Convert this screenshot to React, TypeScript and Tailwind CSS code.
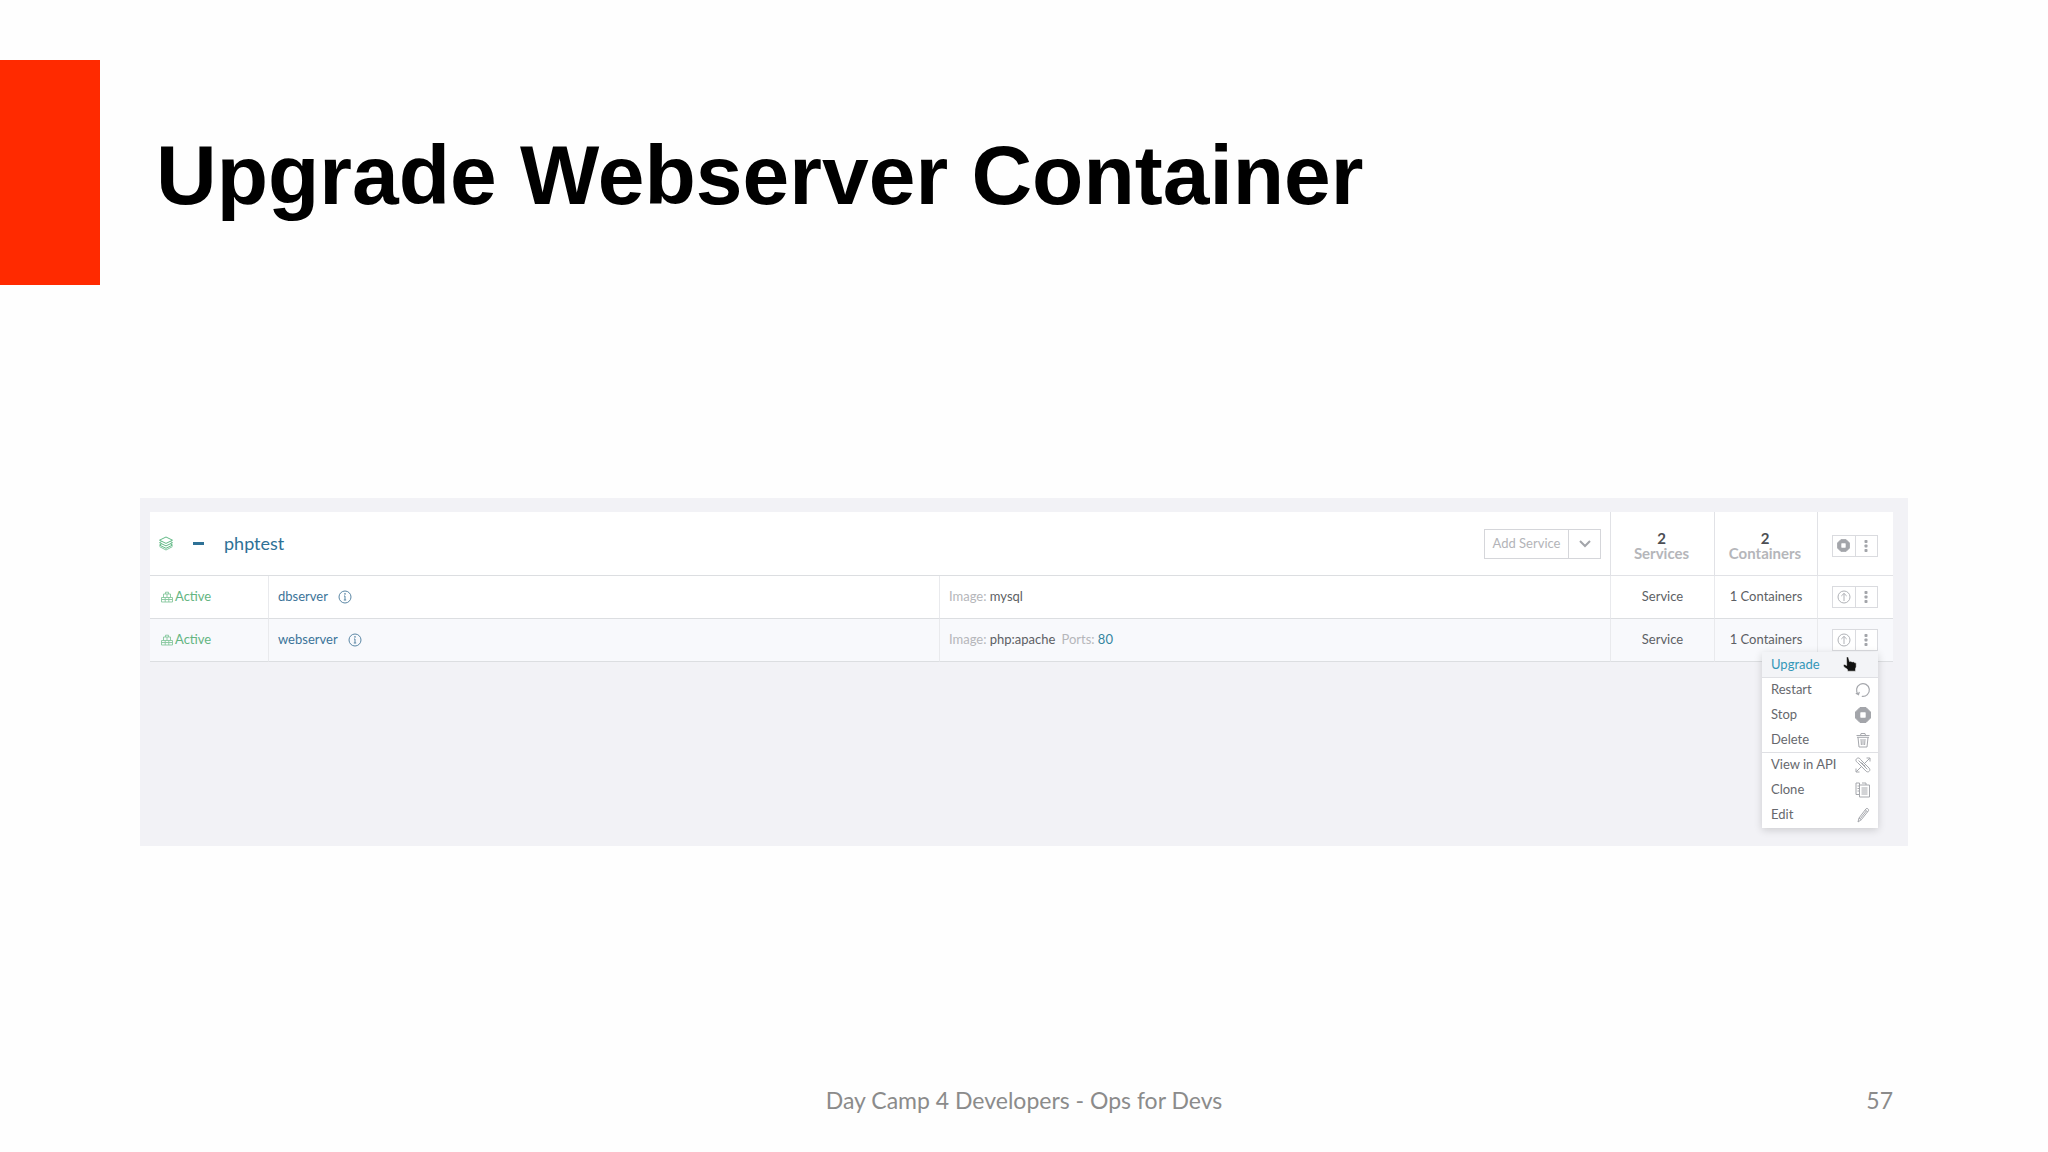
import type { ReactNode } from 'react';
import clsx from 'clsx';

const services = [
  { name: 'dbserver', image: 'mysql', ports: '', open: false },
  { name: 'webserver', image: 'php:apache', ports: '80', open: true },
];

function StackIcon() {
  return (
    <svg width="16" height="16" viewBox="0 0 16 16" fill="none" stroke="#62ba86" strokeWidth="1" strokeLinejoin="round">
      <path d="M8 1 14.500 4.200 8 7.400 1.500 4.200Z" />
      <path d="M3.500 5.600 1.500 6.700 8 9.900l6.500-3.200-2-1.100" />
      <path d="M3.500 8 1.500 9.100 8 12.300l6.500-3.200-2-1.100" />
      <path d="M1.500 10.600 8 14l6.500-3.400" strokeWidth=".8" />
    </svg>
  );
}

function ServiceIcon() {
  return (
    <svg width="12" height="12" viewBox="0 0 12 12" fill="none" stroke="#86c79d" strokeWidth="0.9">
      <path d="M.5 6.500h11v4.500H.5zM4.200 6.500V11M7.800 6.500V11M2.500 6.500V3h7v3.500M6 3v3.500M4.500 3V1.200h3V3M.5 8.500h11" />
    </svg>
  );
}

function InfoIcon() {
  return (
    <svg width="14" height="14" viewBox="0 0 14 14" fill="none" stroke="#5b87a5" strokeWidth="1">
      <circle cx="7" cy="7" r="6" />
      <path d="M6 6h1v4M5.800 10h2.400" />
      <circle cx="7" cy="3.900" r=".4" fill="#5b87a5" />
    </svg>
  );
}

function UpIcon() {
  return (
    <svg width="14" height="14" viewBox="0 0 14 14" fill="none" stroke="#b0b2b7" strokeWidth="1">
      <circle cx="7" cy="7" r="6" />
      <path d="M7 11V3.500M4.300 6 7 3.400 9.700 6" />
    </svg>
  );
}

function StopIcon({ size }: { size: number }) {
  return (
    <svg width={size} height={size} viewBox="0 0 16 16">
      <path d="M5 .5h6L15.500 5v6L11 15.500H5L.5 11V5Z" fill="#a3a5aa" stroke="#a3a5aa" strokeLinejoin="round" />
      <rect x="5.300" y="5.300" width="5.400" height="5.400" rx=".6" fill="#fff" />
    </svg>
  );
}

function DotsIcon() {
  return (
    <svg width="4" height="14" viewBox="0 0 4 14" fill="#a3a5aa">
      <rect x=".5" y="1" width="3" height="3" rx=".8" />
      <rect x=".5" y="5.500" width="3" height="3" rx=".8" />
      <rect x=".5" y="10" width="3" height="3" rx=".8" />
    </svg>
  );
}

function MenuSvg({ children }: { children: ReactNode }) {
  return (
    <svg width="16" height="16" viewBox="0 0 16 16" fill="none" stroke="#a6a8ad" strokeWidth="1">
      {children}
    </svg>
  );
}

const menuGroups: { label: string; icon?: ReactNode }[][] = [
  [{ label: 'Upgrade' }],
  [
    {
      label: 'Restart',
      icon: (
        <MenuSvg>
          <path d="M3.300 12.400A6.400 6.400 0 1 1 6.800 14.300M.8 11.300l2.700 1.300.8-2.800" strokeWidth="1.200" />
        </MenuSvg>
      ),
    },
    { label: 'Stop', icon: <StopIcon size={16} /> },
    {
      label: 'Delete',
      icon: (
        <MenuSvg>
          <path d="M1.500 3.500h13M2 5.300h12M5.500 3.500l.5-2h4l.5 2M3 5.500 4 15h8l1-9.500M6 7l.4 6M8 7v6M10 7l-.4 6" />
        </MenuSvg>
      ),
    },
  ],
  [
    {
      label: 'View in API',
      icon: (
        <MenuSvg>
          <path d="M1.500 1.800C3 .3 4.800 1 5.500 2.500L14 11c1.200 1.200 1 2.500.2 3.300s-2.200.8-3.200-.2L2.500 5.500C1 4.800.3 3 1.500 1.800ZM3.500 3.500l8.800 8.800M6.500 5.500l1.800 1.800M8.500 7.500l1.800 1.800" />
          <path d="M1.200 14.800 6 10M10 6l4.800-4.800M11.500 1H15v3.500M1 11.500V15h3.500" />
        </MenuSvg>
      ),
    },
    {
      label: 'Clone',
      icon: (
        <MenuSvg>
          <path d="M4.500 3V1H1v11.500h3.500M2.500 4h1.500M2.500 6.500h1.500M2.500 9h1.500M4.500 3h10v12h-10zM7 1h4v2M6.500 6h6M6.500 8h6M6.500 10h6M6.500 12h6" />
        </MenuSvg>
      ),
    },
    {
      label: 'Edit',
      icon: (
        <MenuSvg>
          <path d="M3 15 4 11 11 1.800c1-1 3.200.3 2.500 1.900L6.300 12.700ZM4 11l2.300 1.700M10.300 3l2.300 1.700M5.500 11.500 11.300 4" />
        </MenuSvg>
      ),
    },
  ],
];

function HandCursor() {
  return (
    <svg width="16" height="16" viewBox="0 0 16 16" className="absolute top-1 right-5">
      <path
        d="M4.500 1.200c1-.6 1.900 0 2.100 1L7.500 5.500l1.300-.2 1.300.6 1.400-.1 1 .8 1.700.4v4L13.500 12.500v2.700H5.700l-.4-2L2 11 1.200 9l1.500-.5 2 1Z"
        fill="#111"
        stroke="#fff"
        strokeWidth=".5"
      />
    </svg>
  );
}

function ActionMenu() {
  return (
    <div className="absolute top-[33px] right-[15px] z-10 w-[116px] bg-white pb-px text-left shadow-[0_2px_8px_rgba(0,0,0,0.16)]">
      {menuGroups.map((group, i) => (
        <div key={i}>
          {group.map(({ label, icon }) => (
            <button
              key={label}
              className={clsx(
                'relative flex h-[25px] w-full items-center justify-between pr-[7px] pl-[9px]',
                icon ? 'border-[#dfe0e4] text-[#66686d] first:border-t' : 'bg-[#f3f4f7] text-[#3397b8]',
              )}
            >
              {label}
              {icon ?? <HandCursor />}
            </button>
          ))}
        </div>
      ))}
    </div>
  );
}

function ButtonPair({ icon, label }: { icon: ReactNode; label: string }) {
  return (
    <div className="ml-[14px] flex h-[22px] w-[46px] border border-[#dadbdf] bg-white">
      <button aria-label={label} className="flex flex-1 items-center justify-center border-r border-[#dadbdf]">
        {icon}
      </button>
      <button aria-label="More actions" className="flex flex-1 items-center justify-center">
        <DotsIcon />
      </button>
    </div>
  );
}

function Count({ value, label }: { value: number; label: string }) {
  return (
    <td className="border-b border-l border-[#e1e2e6] pt-1 pr-[2px] text-center text-[15px] leading-[15px] font-bold text-[#b5b6ba]">
      <div className="text-[#4d4f54]">{value}</div>
      <div>{label}</div>
    </td>
  );
}

export default function App() {
  return (
    <div className="flex min-h-screen flex-col bg-[#fefefe] pt-[60px] font-['Lato',sans-serif]">
      <header className="flex h-[225px] items-center">
        <div className="h-full w-[100px] bg-[#ff2a00]" />
        <h1 className="mt-1 ml-14 font-['Liberation_Sans',sans-serif] text-[84px] leading-[96px] font-bold text-black">
          Upgrade Webserver Container
        </h1>
      </header>

      <main className="mx-[140px] mt-[213px] min-h-[348px] bg-[#f2f2f6] pt-[14px] pr-[15px] pl-[10px]">
        <table className="w-full table-fixed border-separate border-spacing-0 text-[13px] text-[#5d5f64]">
          <colgroup>
            <col className="w-[118px]" />
            <col />
            <col />
            <col className="w-[104px]" />
            <col className="w-[103px]" />
            <col className="w-[76px]" />
          </colgroup>
          <tbody>
            <tr className="h-16 bg-white">
              <td colSpan={3} className="border-b border-[#dcdee1]">
                <div className="flex items-center pr-[9px] pl-2">
                  <StackIcon />
                  <button aria-label="Collapse" className="ml-[19px] h-[3px] w-[11px] bg-[#2e7196]" />
                  <a href="#phptest" className="ml-5 text-[18px] text-[#2e7196]">
                    phptest
                  </a>
                  <div className="ml-auto flex h-[30px] border border-[#d5d6da] text-[13px] text-[#b3b4b8]">
                    <button className="w-[83px]">Add Service</button>
                    <button aria-label="More service types" className="flex w-8 items-center justify-center border-l border-[#d5d6da]">
                      <svg width="12" height="8" viewBox="0 0 12 8" fill="none" stroke="#a3a5aa" strokeWidth="2">
                        <path d="m1 1 5 5 5-5" />
                      </svg>
                    </button>
                  </div>
                </div>
              </td>
              <Count value={2} label="Services" />
              <Count value={2} label="Containers" />
              <td className="border-b border-l border-[#e1e2e6] pt-1">
                <ButtonPair icon={<StopIcon size={13} />} label="Stop stack" />
              </td>
            </tr>

            {services.map(({ name, image, ports, open }) => (
              <tr key={name} className={clsx('h-[43px]', open ? 'bg-[#f8f9fc]' : 'bg-white')}>
                <td className="border-b border-[#dcdee1]">
                  <div className="flex items-center gap-[2px] pl-[11px] text-[#64b582]">
                    <ServiceIcon />
                    Active
                  </div>
                </td>
                <td className="border-b border-l border-[#dcdee1] border-l-[#e9eaed]">
                  <div className="flex items-center gap-[10px] pl-[9px]">
                    <a href={`#${name}`} className="text-[#3b7499]">
                      {name}
                    </a>
                    <InfoIcon />
                  </div>
                </td>
                <td className="border-b border-l border-[#dcdee1] border-l-[#e9eaed] pl-[9px]">
                  <span className="text-[#b5b6ba]">Image:</span> {image}
                  {ports && (
                    <span className="ml-[6px] text-[#b5b6ba]">
                      Ports:{' '}
                      <a href={`#port-${ports}`} className="text-[#35859f]">
                        {ports}
                      </a>
                    </span>
                  )}
                </td>
                <td className="border-b border-l border-[#dcdee1] border-l-[#e9eaed] text-center">Service</td>
                <td className="border-b border-l border-[#dcdee1] border-l-[#e9eaed] text-center">1 Containers</td>
                <td className="relative border-b border-l border-[#dcdee1] border-l-[#e9eaed]">
                  <ButtonPair icon={<UpIcon />} label={`Upgrade ${name}`} />
                  {open && <ActionMenu />}
                </td>
              </tr>
            ))}
          </tbody>
        </table>
      </main>

      <footer className="mt-auto grid grid-cols-3 px-[155px] pb-9 text-[23px] leading-8 text-[#8b8b8b]">
        <p className="col-start-2 text-center">Day Camp 4 Developers - Ops for Devs</p>
        <p className="text-right">57</p>
      </footer>
    </div>
  );
}
